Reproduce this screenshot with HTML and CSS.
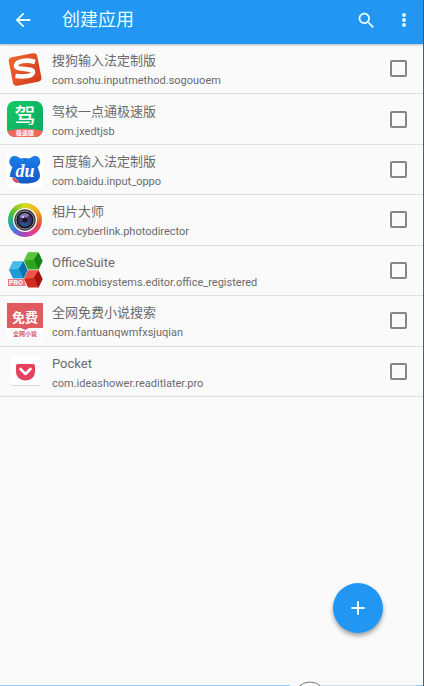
FILE: index.html
```html
<!DOCTYPE html>
<html lang="zh-CN">
<head>
<meta charset="UTF-8">
<meta name="viewport" content="width=device-width, initial-scale=1">
<title>创建应用</title>
<link rel="stylesheet" href="styles.css">
</head>
<body>
<div class="page">
    <header class="top-bar">
        <button class="icon-btn" type="button" aria-label="返回">
            <svg width="22" height="22" viewBox="0 0 24 24" fill="#e8ffff"><path d="M20 11H7.83l5.59-5.59L12 4l-8 8 8 8 1.41-1.41L7.83 13H20z"/></svg>
        </button>
        <h1>创建应用</h1>
        <button class="icon-btn" type="button" aria-label="搜索">
            <svg width="21" height="21" viewBox="0 0 24 24" fill="#e8ffff"><path d="M15.5 14h-.79l-.28-.27C15.41 12.59 16 11.11 16 9.5 16 5.91 13.09 3 9.5 3S3 5.91 3 9.5 5.91 16 9.5 16c1.61 0 3.09-.59 4.23-1.57l.27.28v.79l5 4.99L20.49 19l-4.99-5zm-6 0C7.01 14 5 11.99 5 9.5S7.01 5 9.5 5 14 7.01 14 9.5 11.99 14 9.5 14z"/></svg>
        </button>
        <button class="icon-btn" type="button" aria-label="更多">
            <svg width="20" height="20" viewBox="0 0 24 24" fill="#e8ffff"><circle cx="12" cy="6" r="2.3"/><circle cx="12" cy="12" r="2.3"/><circle cx="12" cy="18" r="2.3"/></svg>
        </button>
    </header>
    <ul class="app-list">
        <li>
            <label class="app">
                <svg class="app-icon" viewBox="0 0 36 36">
                    <defs><linearGradient id="sogou" x1="0" y1="0" x2="1" y2="1"><stop offset="0" stop-color="#f4632c"/><stop offset="1" stop-color="#cf3c1c"/></linearGradient></defs>
                    <rect x="3.5" y="4" width="29" height="29" rx="4" fill="url(#sogou)" transform="rotate(-11 18 18)"/>
                    <path d="M28 11C20 8.500 9.500 9.500 9 14.500c-.5 5 17 2 17 6.500 0 4.500-9 5-17.500 4" fill="none" stroke="#fff" stroke-width="4.600"/>
                </svg>
                <span class="app-text"><b>搜狗输入法定制版</b><small>com.sohu.inputmethod.sogouoem</small></span>
                <input type="checkbox">
            </label>
        </li>
        <li>
            <label class="app">
                <svg class="app-icon" viewBox="0 0 36 36">
                    <defs>
                        <linearGradient id="jia" x1="0" y1="0" x2="1" y2="1"><stop offset="0" stop-color="#16c763"/><stop offset="1" stop-color="#08a865"/></linearGradient>
                        <clipPath id="jiaclip"><rect width="36" height="36" rx="8"/></clipPath>
                    </defs>
                    <g clip-path="url(#jiaclip)">
                        <rect width="36" height="36" fill="url(#jia)"/>
                        <path d="M0 30Q18 25 36 30V36H0z" fill="#f2675c"/>
                    </g>
                    <text class="glyph thin" x="18" y="22" font-size="21">驾</text>
                    <text class="glyph" x="18" y="34" font-size="6">极速版</text>
                </svg>
                <span class="app-text"><b>驾校一点通极速版</b><small>com.jxedtjsb</small></span>
                <input type="checkbox">
            </label>
        </li>
        <li>
            <label class="app">
                <svg class="app-icon" viewBox="0 0 36 36">
                    <defs><linearGradient id="baidu" x1="0" y1="0" x2="0" y2="1"><stop offset="0" stop-color="#1a7fe8"/><stop offset="1" stop-color="#1457c8"/></linearGradient></defs>
                    <rect width="36" height="36" fill="#fff"/>
                    <path d="M7.500 4c3 0 4.500 1.500 6 2.500q4-1 9 0C24 5.500 25.500 4 28 4c6 0 7 8 2.500 11 1 3 2.500 5 2.500 9 0 5-6 7.500-15 7.500S3 29 3 24c0-4 1.500-6 2.500-9C0 12 2 4 7.500 4z" fill="url(#baidu)"/>
                    <path d="M3 25c5 0 9 3 10 8H3z" fill="#fff"/>
                    <path d="M5 26c4 0 6 2 7 5-4 0-6-2-7-5z" fill="#e44858"/>
                    <text class="script" x="18" y="25" font-size="18">du</text>
                </svg>
                <span class="app-text"><b>百度输入法定制版</b><small>com.baidu.input_oppo</small></span>
                <input type="checkbox">
            </label>
        </li>
        <li>
            <label class="app">
                <span class="app-icon photo">
                    <svg width="24" height="24" viewBox="0 0 24 24">
                        <circle cx="12" cy="12" r="12" fill="#fff"/>
                        <circle cx="12" cy="12" r="10.700" fill="#35353c"/>
                        <circle cx="12" cy="12" r="9" fill="#15151d" stroke="#a5a5ac" stroke-width=".8"/>
                        <circle cx="12" cy="12" r="7" fill="#3c3566"/>
                        <path d="M6.500 9a6 6 0 0 1 10-2L12 11z" fill="#8b7bb0"/>
                        <path d="M7 16a6 6 0 0 0 10-1l-5-3z" fill="#28508c"/>
                        <circle cx="12" cy="12" r="2.500" fill="#151325"/>
                        <circle cx="10" cy="9" r="1" fill="#e3dcf0"/>
                    </svg>
                </span>
                <span class="app-text"><b>相片大师</b><small>com.cyberlink.photodirector</small></span>
                <input type="checkbox">
            </label>
        </li>
        <li>
            <label class="app">
                <svg class="app-icon" viewBox="0 0 36 36">
                    <path d="M21 .5h10.500l4 8.500-4 8.500H21L17 9z" fill="#2fa51f"/>
                    <path d="M21 .5h10.500l-4.500 7L17 9z" fill="#55c63b"/><path d="M31.500.5l4 8.500-4 8.500-4.500-10z" fill="#168414"/>
                    <path d="M6 9.500h10.500l4 8.500-4 8.500H6L2 18z" fill="#1f9bd8"/>
                    <path d="M6 9.500h10.500l-4.500 7L2 18z" fill="#49bde9"/><path d="M16.500 9.500l4 8.500-4 8.500-4.500-10z" fill="#0872b0"/>
                    <path d="M21 18.500h10.500l4 8.500-4 8.500H21L17 27z" fill="#cf2c24"/>
                    <path d="M21 18.500h10.500l-4.500 7L17 27z" fill="#ef5549"/><path d="M31.500 18.500l4 8.500-4 8.500-4.500-10z" fill="#a3130f"/>
                    <path d="M1 27h16l2 7H1z" fill="#e9788a"/>
                    <text class="pro" x="9" y="33" font-size="7">PRO</text>
                </svg>
                <span class="app-text"><b>OfficeSuite</b><small>com.mobisystems.editor.office_registered</small></span>
                <input type="checkbox">
            </label>
        </li>
        <li>
            <label class="app">
                <svg class="app-icon" viewBox="0 0 36 36">
                    <rect width="36" height="36" fill="#fff"/>
                    <path d="M0 0h36v25H22l-4 2-4-2H0z" fill="#e05b5f"/>
                    <text class="glyph" x="18" y="19" font-size="13">免费</text>
                    <text class="glyph red" x="18" y="33" font-size="6">全网小说</text>
                </svg>
                <span class="app-text"><b>全网免费小说搜索</b><small>com.fantuanqwmfxsjuqian</small></span>
                <input type="checkbox">
            </label>
        </li>
        <li>
            <label class="app">
                <svg class="app-icon" viewBox="0 0 36 36">
                    <rect x="4" y="5" width="29" height="28" rx="2" fill="#d5d5d5"/>
                    <rect x="4" y="3" width="29" height="29" rx="2" fill="#fff"/>
                    <path d="M11 11h15q2 0 2 2v5c0 6-4 9.500-9.500 9.500S9 24 9 18v-5q0-2 2-2z" fill="#e5405c"/>
                    <path d="M13.500 16l5 5 5-5" fill="none" stroke="#fff" stroke-width="2.600" stroke-linecap="round" stroke-linejoin="round"/>
                </svg>
                <span class="app-text"><b>Pocket</b><small>com.ideashower.readitlater.pro</small></span>
                <input type="checkbox">
            </label>
        </li>
    </ul>
    <button class="add-btn" type="button" aria-label="添加">
        <svg width="20" height="20" viewBox="0 0 24 24" fill="#e8ffff"><path d="M20 13.200h-6.800V20h-2.400v-6.800H4v-2.400h6.800V4h2.400v6.800H20z"/></svg>
    </button>
    <div class="bottom-line">
        <svg width="126" height="5" viewBox="0 0 126 5"><rect width="126" height="5" fill="#f7f9fa"/><path d="M32 4h94v1H32z" fill="#d5e1e8"/><circle cx="20" cy="17" r="16" fill="#fff" stroke="#777"/></svg>
    </div>
</div>
</body>
</html>
```
FILE: styles.css
```css
*{
    box-sizing: border-box;
}
body,h1,ul{
    margin: 0;
    padding: 0;
}
ul{list-style: none;}
body{
    background: #fafafa;
    color: #6b6b6b;
    font-family: Roboto, "Noto Sans CJK SC", sans-serif;
}
button{
    padding: 0;
    border: none;
    background: none;
    cursor: pointer;
}
.page{
    min-height: 100vh;
    border-right: 1px solid #555b60;
}
.top-bar{
    display: flex;
    align-items: center;
    height: 44px;
    padding: 0 0 4px 4px;
    background: #2196f3;
    box-shadow: 0 1px 2px rgba(0,60,100,.35);
    position: relative;
}
.top-bar h1{
    flex: 1;
    padding-left: 20px;
    font-size: 18px;
    line-height: 24px;
    font-weight: 400;
    color: #e8ffff;
}
.icon-btn{
    display: flex;
    align-items: center;
    justify-content: center;
    width: 38px;
    height: 38px;
}
.app-list{
    display: grid;
    grid-auto-rows: 1fr;
    min-height: 353px;
}
.app-list li{
    border-bottom: 1px solid #e0e0e0;
}
.app{
    display: flex;
    align-items: center;
    height: 100%;
    padding: 0 16px 0 7px;
}
.app-icon{
    flex: none;
    width: 36px;
    height: 36px;
    overflow: visible;
}
.app-text{
    flex: 1;
    min-width: 0;
    padding: 5px 0 0 9px;
}
.app-text b,
.app-text small{
    display: block;
    line-height: 20px;
}
.app-text b{
    font-size: 13px;
    font-weight: 400;
}
.app-text small{
    font-size: 11px;
}
.app input{
    appearance: none;
    width: 17px;
    height: 17px;
    margin: 0;
    border: 2px solid #858585;
    border-radius: 2px;
}
.app input:checked{
    border-color: #2196f3;
    background: #2196f3;
}
/* icons */
.glyph{
    fill: #fff;
    font-family: "Noto Sans CJK SC", sans-serif;
    font-weight: 700;
    text-anchor: middle;
}
.thin{font-weight: 500;}
.red{fill: #dc5960;}
.script{
    fill: #fff;
    font-family: "Liberation Serif", serif;
    font-style: italic;
    font-weight: 700;
    text-anchor: middle;
}
.pro{
    fill: #fff;
    font-weight: 700;
    text-anchor: middle;
}
.photo{
    display: flex;
    align-items: center;
    justify-content: center;
    border: 1px solid #fff;
    border-radius: 50%;
    background: conic-gradient(#d8dc20, #f3b61e 45deg, #f07a28 80deg, #e84848 110deg, #d840a0 160deg, #8552c8 200deg, #3b88d8 235deg, #28b090 265deg, #58bd35 300deg, #d8dc20);
}
.add-btn{
    display: flex;
    align-items: center;
    justify-content: center;
    position: fixed;
    right: 41px;
    bottom: 53px;
    width: 50px;
    height: 50px;
    border-radius: 50%;
    background: #2196f3;
    box-shadow: 0 3px 4px rgba(0,0,0,.35);
}
.bottom-line{
    display: flex;
    justify-content: flex-end;
    align-items: flex-end;
    position: fixed;
    left: 0;
    right: 1px;
    bottom: 0;
}
.bottom-line:before,
.bottom-line:after{
    content: '';
    height: 1px;
    background: #90caf9;
}
.bottom-line:before{flex: 1;}
.bottom-line:after{width: 7px;}
```
